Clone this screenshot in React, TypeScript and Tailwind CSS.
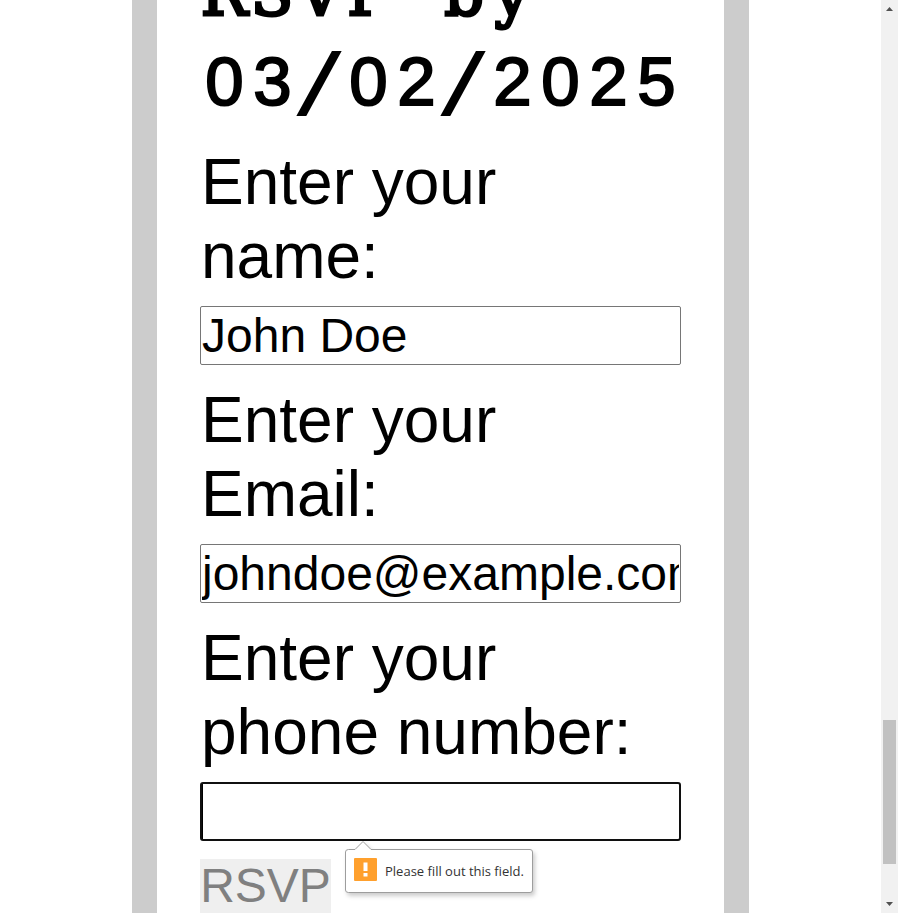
const fields = [
  { first: 'Enter your', second: 'name:', value: 'John Doe' },
  { first: 'Enter your', second: 'Email:', value: 'johndoe@example.com' },
  { first: 'Enter your', second: 'phone number:', value: '' },
];

function Heading() {
  return (
    <h1 className="-mt-[55px] h-[208px] w-[481px] whitespace-nowrap">
      <span className="flex h-[91px] font-['DejaVu_Serif',serif] text-[62px] leading-[98px] [-webkit-text-stroke:3px_black]">
        {'RSVP by'.split('').map((c, i) => (
          <span key={i} className="flex w-12 shrink-0 justify-center whitespace-pre">{c}</span>
        ))}
      </span>
      <span className="flex h-[91px] items-baseline font-['Liberation_Sans',sans-serif] text-[69px] leading-[91px] [-webkit-text-stroke:2px_black]">
        {'03/02/2025'.split('').map((c, i) => (
          <span key={i} className={c === '/' ? "relative -left-px top-[9px] flex w-12 shrink-0 justify-center font-['Liberation_Mono',monospace] text-[86px]" : 'flex w-12 shrink-0 justify-center pl-px'}>{c}</span>
        ))}
      </span>
    </h1>
  );
}

function Tip() {
  return (
    <div className="absolute left-[345px] top-[841px] h-[53px] w-[189px]">
      <svg className="absolute inset-0 overflow-visible" width="189" height="53">
        <path className="drop-shadow-[2px_3px_2px_rgba(0,0,0,0.2)]" d="M3.5 8.5H10L18 .5L26 8.5H185Q187.500 8.500 187.500 11V49Q187.500 51.500 185 51.500H3.500Q.5 51.500 .5 49V11Q.5 8.500 3.500 8.500Z" fill="#fff" stroke="#9d9d9d" />
        <rect x="9" y="17" width="23" height="23" rx="1" fill="#ffa02d" />
        <path d="M18.500 21.500h4v8.500h-4zM18.500 32h4v3.500h-4z" fill="#fff" />
      </svg>
      <span className="absolute left-10 top-[21px] whitespace-nowrap font-['Open_Sans',sans-serif] text-[13px] leading-[18px] text-[#333]">Please fill out this field.</span>
    </div>
  );
}

function Scrollbar() {
  return (
    <aside className="ml-auto flex h-full w-[17px] flex-col items-center bg-[#f1f1f1]">
      <svg className="shrink-0" width="17" height="17"><path d="M5 11L8.500 7L12 11Z" fill="#505050" /></svg>
      <div className="mt-[703px] h-[144px] w-[13px] shrink-0 bg-[#c1c1c1]" />
      <svg className="mt-auto shrink-0" width="17" height="17"><path d="M5 6L8.500 10L12 6Z" fill="#505050" /></svg>
    </aside>
  );
}

export default function App() {
  return (
    <div className="relative flex h-[913px] w-[898px] overflow-hidden bg-white font-['Liberation_Sans',Arial,sans-serif] text-black">
      <main className="ml-[132px] flex h-[913px] w-[617px] flex-col border-x-[25px] border-[#ccc] pl-[43px]">
        <Heading />
        {fields.map((f, i) => (
          <section key={i} className="h-[238px] shrink-0 -mt-[7px] mb-[7px]">
            <label className="block whitespace-nowrap pl-px text-[64px] leading-[74px]">{f.first}<br />{f.second}</label>
            {f.value ? (
              <input readOnly defaultValue={f.value} className="mt-[13px] block h-[59px] w-[481px] rounded-[2px] border border-[#767676] p-px text-[48px] outline-none" />
            ) : (
              <div className="mt-[13px] flex h-[59px] w-[481px] rounded-[3px] border-2 border-[#101010]"><i className="h-[55px] w-px bg-black" /></div>
            )}
          </section>
        ))}
        <button className="-mt-[7px] block h-[54px] w-[131px] shrink-0 bg-[#efefef] text-[48px] leading-[54px] text-[#808080]">RSVP</button>
      </main>
      <Scrollbar />
      <Tip />
    </div>
  );
}
